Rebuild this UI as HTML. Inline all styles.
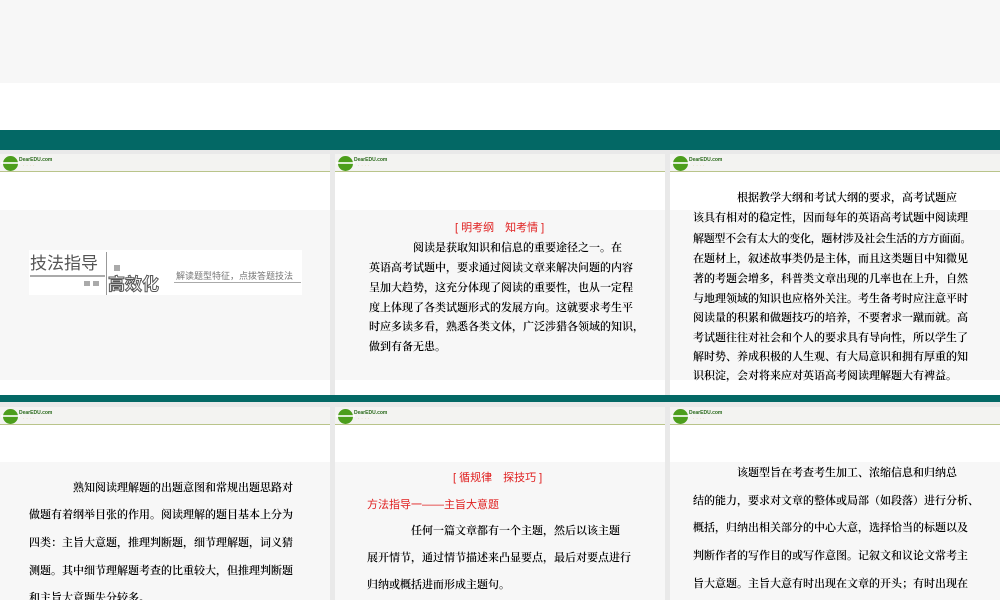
<!DOCTYPE html>
<html><head><meta charset="utf-8"><style>
*{margin:0;padding:0;box-sizing:border-box}
body{width:1000px;height:600px;overflow:hidden;background:#e9e9e9;position:relative;font-family:"Liberation Serif","Noto Serif CJK SC",serif}
.a{position:absolute}
.teal{background:#036865}
.slide{position:absolute;background:#fff;overflow:hidden}
.hdr{position:absolute;left:0;right:0;top:0;height:18px;background:#f3f3f1;border-bottom:1px solid #b9c48a}
.logo{position:absolute;left:3px;top:2px;width:15px;height:15px;border-radius:50%;background:#4c9e1c}
.logo:after{content:"";position:absolute;left:-2px;top:6px;width:19px;height:2px;background:#fff;opacity:.8}
.lt{position:absolute;left:19px;top:3px;font-size:5px;color:#2a6a1c;font-weight:bold;line-height:6px;font-family:"Liberation Sans",sans-serif}
.lt2{position:absolute;left:23px;top:10px;font-size:4px;color:#c8a040;letter-spacing:2px;line-height:4px}
.ct{position:absolute;left:0;right:0;background:#f7f7f7}
.t{position:absolute;font-size:11px;color:#000;white-space:nowrap;line-height:12px;font-weight:600}
.r{color:#e02020;font-family:"Liberation Sans","Noto Sans CJK SC",sans-serif;font-weight:normal}
</style></head><body>
<div class="a" style="left:0;top:0;width:1000px;height:83px;background:#f7f7f7"></div>
<div class="a" style="left:0;top:83px;width:1000px;height:47px;background:#fff"></div>
<div class="a teal" style="left:0;top:130px;width:1000px;height:20px"></div>
<div class="a teal" style="left:0;top:395px;width:1000px;height:7px"></div>

<!-- row1 col1 -->
<div class="slide" style="left:0;top:154px;width:330px;height:241px">
<div class="hdr"><div class="logo"></div><div class="lt">DearEDU.com</div><div class="lt2">····</div></div>
<div class="ct" style="top:56px;height:170px"></div>
<div class="a" style="left:29px;top:96px;width:273px;height:45px;background:#fff"></div>
<div class="a" style="left:30px;top:100px;font-size:17px;color:#555;line-height:20px;font-family:'Liberation Sans','Noto Sans CJK SC',sans-serif">技法指导</div>
<div class="a" style="left:30px;top:121px;width:75px;height:2px;background:#aaa"></div>
<div class="a" style="left:106px;top:98px;width:1px;height:43px;background:#999"></div>
<div class="a" style="left:114px;top:111px;width:6px;height:6px;background:#aaa"></div>
<div class="a" style="left:84px;top:127px;width:6px;height:5px;background:#aaa"></div>
<div class="a" style="left:93px;top:127px;width:6px;height:5px;background:#aaa"></div>
<div class="a" style="left:108px;top:121px;font-size:17px;color:#fff;-webkit-text-stroke:1px #555;line-height:20px;font-weight:bold;font-family:'Liberation Sans','Noto Sans CJK SC',sans-serif">高效化</div>
<div class="a" style="left:176px;top:117px;font-size:9px;color:#777;line-height:10px;font-family:'Liberation Sans','Noto Sans CJK SC',sans-serif">解读题型特征，点拨答题技法</div>
<div class="a" style="left:174px;top:128px;width:127px;height:1px;background:#aaa"></div>
</div>

<!-- row1 col2 -->
<div class="slide" style="left:335px;top:154px;width:330px;height:241px">
<div class="hdr"><div class="logo"></div><div class="lt">DearEDU.com</div><div class="lt2">····</div></div>
<div class="ct" style="top:56px;height:170px"></div>
<div class="t r" style="left:120px;top:68px">[ 明考纲　知考情 ]</div>
<div class="t" style="left:34px;top:88px">　　　　阅读是获取知识和信息的重要途径之一。在</div>
<div class="t" style="left:34px;top:108px">英语高考试题中，要求通过阅读文章来解决问题的内容</div>
<div class="t" style="left:34px;top:128px">呈加大趋势，这充分体现了阅读的重要性，也从一定程</div>
<div class="t" style="left:34px;top:148px">度上体现了各类试题形式的发展方向。这就要求考生平</div>
<div class="t" style="left:34px;top:167px">时应多读多看，熟悉各类文体，广泛涉猎各领域的知识，</div>
<div class="t" style="left:34px;top:187px">做到有备无患。</div>
</div>

<!-- row1 col3 -->
<div class="slide" style="left:670px;top:154px;width:330px;height:241px">
<div class="hdr"><div class="logo"></div><div class="lt">DearEDU.com</div><div class="lt2">····</div></div>
<div class="ct" style="top:56px;height:170px"></div>
<div class="t" style="left:23px;top:38px">　　　　根据教学大纲和考试大纲的要求，高考试题应</div>
<div class="t" style="left:23px;top:58px">该具有相对的稳定性，因而每年的英语高考试题中阅读理</div>
<div class="t" style="left:23px;top:79px;letter-spacing:-0.3px">解题型不会有太大的变化，题材涉及社会生活的方方面面。</div>
<div class="t" style="left:23px;top:99px">在题材上，叙述故事类仍是主体，而且这类题目中知微见</div>
<div class="t" style="left:23px;top:119px">著的考题会增多，科普类文章出现的几率也在上升，自然</div>
<div class="t" style="left:23px;top:139px">与地理领域的知识也应格外关注。考生备考时应注意平时</div>
<div class="t" style="left:23px;top:158px">阅读量的积累和做题技巧的培养，不要奢求一蹴而就。高</div>
<div class="t" style="left:23px;top:178px">考试题往往对社会和个人的要求具有导向性，所以学生了</div>
<div class="t" style="left:23px;top:197px">解时势、养成积极的人生观、有大局意识和拥有厚重的知</div>
<div class="t" style="left:23px;top:216px">识积淀，会对将来应对英语高考阅读理解题大有裨益。</div>
</div>

<!-- row2 col1 -->
<div class="slide" style="left:0;top:407px;width:330px;height:193px">
<div class="hdr"><div class="logo"></div><div class="lt">DearEDU.com</div><div class="lt2">····</div></div>
<div class="ct" style="top:55px;height:140px"></div>
<div class="t" style="left:29px;top:75px">　　　　熟知阅读理解题的出题意图和常规出题思路对</div>
<div class="t" style="left:29px;top:102px">做题有着纲举目张的作用。阅读理解的题目基本上分为</div>
<div class="t" style="left:29px;top:130px">四类：主旨大意题，推理判断题，细节理解题，词义猜</div>
<div class="t" style="left:29px;top:158px">测题。其中细节理解题考查的比重较大，但推理判断题</div>
<div class="t" style="left:29px;top:185px">和主旨大意题失分较多。</div>
</div>

<!-- row2 col2 -->
<div class="slide" style="left:335px;top:407px;width:330px;height:193px">
<div class="hdr"><div class="logo"></div><div class="lt">DearEDU.com</div><div class="lt2">····</div></div>
<div class="ct" style="top:55px;height:140px"></div>
<div class="t r" style="left:118px;top:65px">[ 循规律　探技巧 ]</div>
<div class="t r" style="left:32px;top:92px">方法指导一——主旨大意题</div>
<div class="t" style="left:32px;top:118px">　　　　任何一篇文章都有一个主题，然后以该主题</div>
<div class="t" style="left:32px;top:145px">展开情节，通过情节描述来凸显要点，最后对要点进行</div>
<div class="t" style="left:32px;top:172px">归纳或概括进而形成主题句。</div>
</div>

<!-- row2 col3 -->
<div class="slide" style="left:670px;top:407px;width:330px;height:193px">
<div class="hdr"><div class="logo"></div><div class="lt">DearEDU.com</div><div class="lt2">····</div></div>
<div class="ct" style="top:55px;height:140px"></div>
<div class="t" style="left:23px;top:60px">　　　　该题型旨在考查考生加工、浓缩信息和归纳总</div>
<div class="t" style="left:23px;top:88px">结的能力，要求对文章的整体或局部（如段落）进行分析、</div>
<div class="t" style="left:23px;top:115px">概括，归纳出相关部分的中心大意，选择恰当的标题以及</div>
<div class="t" style="left:23px;top:143px">判断作者的写作目的或写作意图。记叙文和议论文常考主</div>
<div class="t" style="left:23px;top:171px">旨大意题。主旨大意有时出现在文章的开头；有时出现在</div>
</div>
</body></html>
